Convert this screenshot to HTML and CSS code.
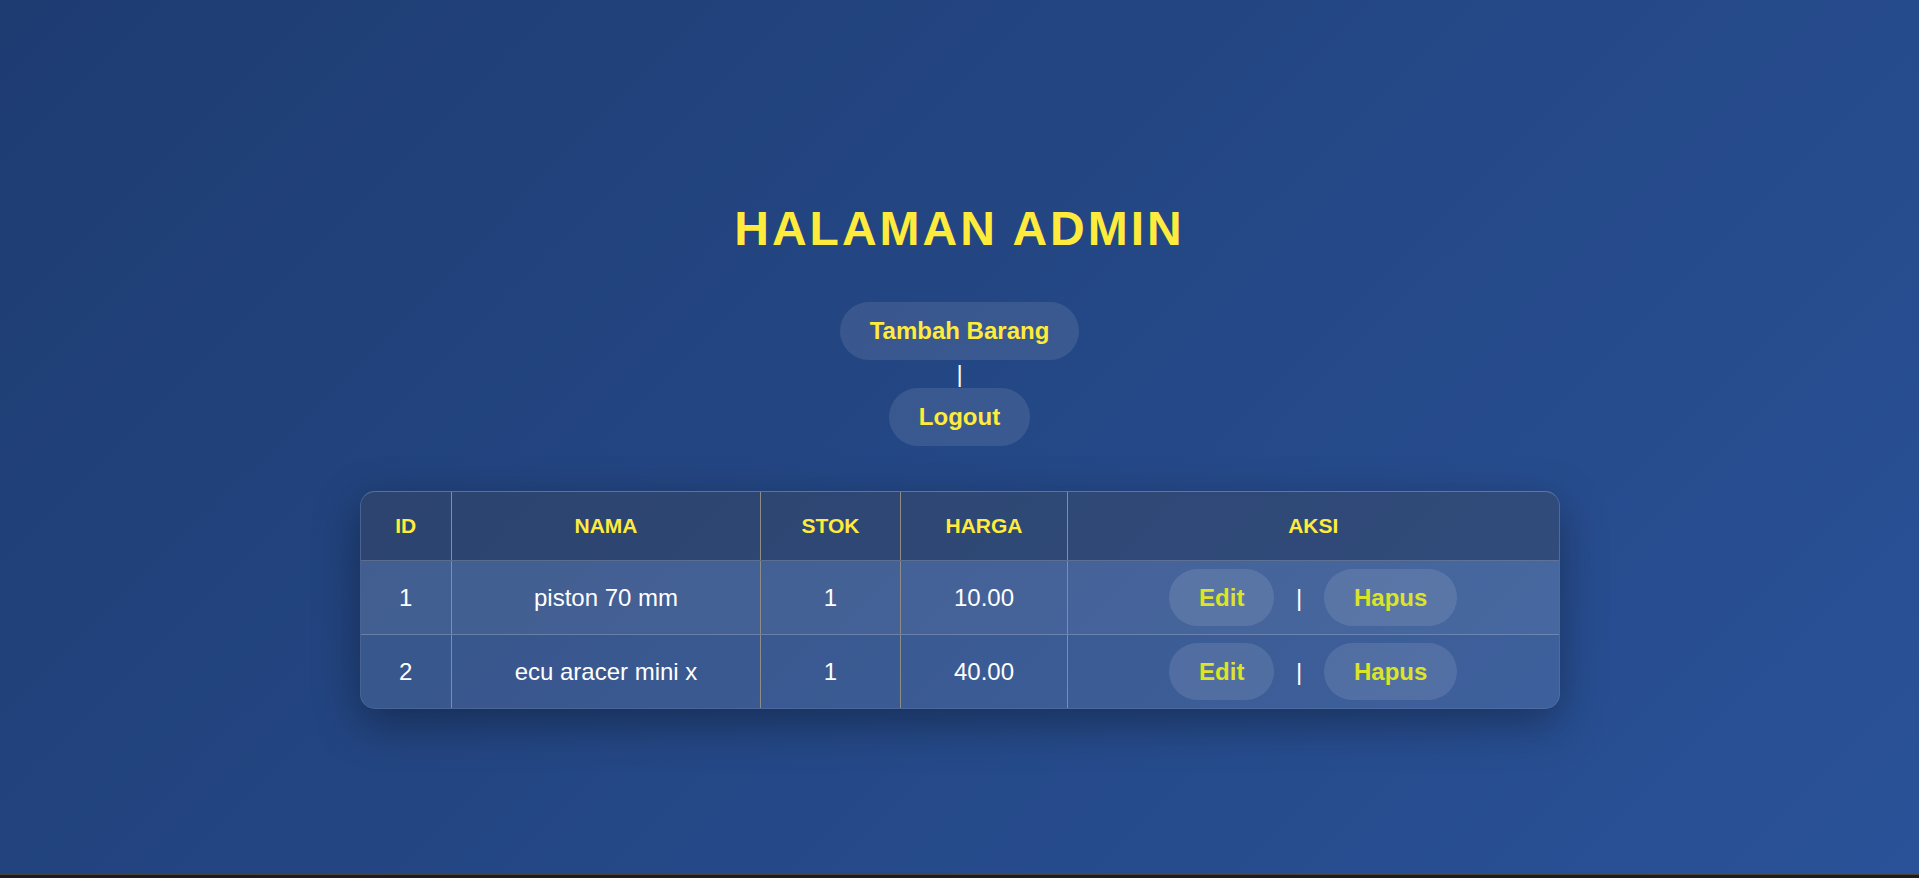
FILE: index.html
```html
<!DOCTYPE html>
<html lang="id">
<head>
<meta charset="utf-8">
<title>Halaman Admin</title>
<link rel="stylesheet" href="styles.css">
</head>
<body>
<main class="page">
  <h1 class="title">HALAMAN ADMIN</h1>
  <nav class="nav">
    <a class="pill" href="#">Tambah Barang</a>
    <span class="sep">|</span>
    <a class="pill" href="#">Logout</a>
  </nav>
  <div class="table-wrap">
    <table class="data">
      <colgroup>
        <col class="c-id">
        <col class="c-nama">
        <col class="c-stok">
        <col class="c-harga">
        <col class="c-aksi">
      </colgroup>
      <thead>
        <tr><th>ID</th><th>NAMA</th><th>STOK</th><th>HARGA</th><th>AKSI</th></tr>
      </thead>
      <tbody>
        <tr>
          <td>1</td><td>piston 70 mm</td><td>1</td><td>10.00</td>
          <td><a class="act" href="#">Edit</a> | <a class="act" href="#">Hapus</a></td>
        </tr>
        <tr>
          <td>2</td><td>ecu aracer mini x</td><td>1</td><td>40.00</td>
          <td><a class="act" href="#">Edit</a> | <a class="act" href="#">Hapus</a></td>
        </tr>
      </tbody>
    </table>
  </div>
</main>
</body>
</html>
```
FILE: styles.css
```css
html {
  background: #1d1c1a;
}
body {
  margin: 0;
  height: 874px;
  border-bottom: 1px solid #46413a;
  background: linear-gradient(135deg, #1e3c72 0%, #2a5298 100%);
  font-family: "Liberation Sans", Arial, sans-serif;
  color: #ffffff;
}
.page {
  padding-top: 201px;
  display: flex;
  flex-direction: column;
  align-items: center;
}
.title {
  margin: 0 0 46px;
  font-size: 48px;
  font-weight: bold;
  letter-spacing: 3px;
  color: #ffeb3b;
  line-height: normal;
}
.nav {
  display: flex;
  flex-direction: column;
  align-items: center;
  font-size: 24px;
}
.sep {
  color: #ffffff;
}
.pill {
  display: inline-block;
  padding: 15px 30px;
  border-radius: 30px;
  background: rgba(255, 255, 255, 0.1);
  color: #ffeb3b;
  font-weight: bold;
  text-decoration: none;
}
.table-wrap {
  margin-top: 45px;
  width: 1200px;
  box-sizing: border-box;
  border: 1px solid rgba(255, 255, 255, 0.08);
  border-top-color: rgba(255, 255, 255, 0.16);
  border-radius: 15px;
  overflow: hidden;
  background: rgba(255, 255, 255, 0.1);
  box-shadow: 0 14px 45px rgba(0, 0, 0, 0.35);
}
.data {
  width: 100%;
  border-collapse: collapse;
  table-layout: fixed;
}
.c-id { width: 91px; }
.c-nama { width: 309px; }
.c-stok { width: 140px; }
.c-harga { width: 167px; }
.data th {
  padding: 22px 10px;
  font-size: 21px;
  font-weight: bold;
  color: #ffeb3b;
  background: rgba(0, 0, 0, 0.2);
  text-align: center;
  border-bottom: 1px solid rgba(255, 255, 255, 0.22);
}
.data td {
  padding: 22.5px 10px;
  font-size: 24px;
  text-align: center;
  color: #ffffff;
  border-bottom: 1px solid rgba(255, 255, 255, 0.2);
}
.data tbody tr:last-child td {
  border-bottom: none;
}
.data tbody tr:nth-child(odd) {
  background: rgba(255, 255, 255, 0.05);
}
.data th + th,
.data td + td {
  border-left: 1px solid #8e8c86;
}
.act {
  display: inline;
  margin: 0 15px;
  padding: 15px 30px;
  border-radius: 30px;
  background: rgba(255, 255, 255, 0.11);
  color: #dce42a;
  font-weight: bold;
  text-decoration: none;
}
```
